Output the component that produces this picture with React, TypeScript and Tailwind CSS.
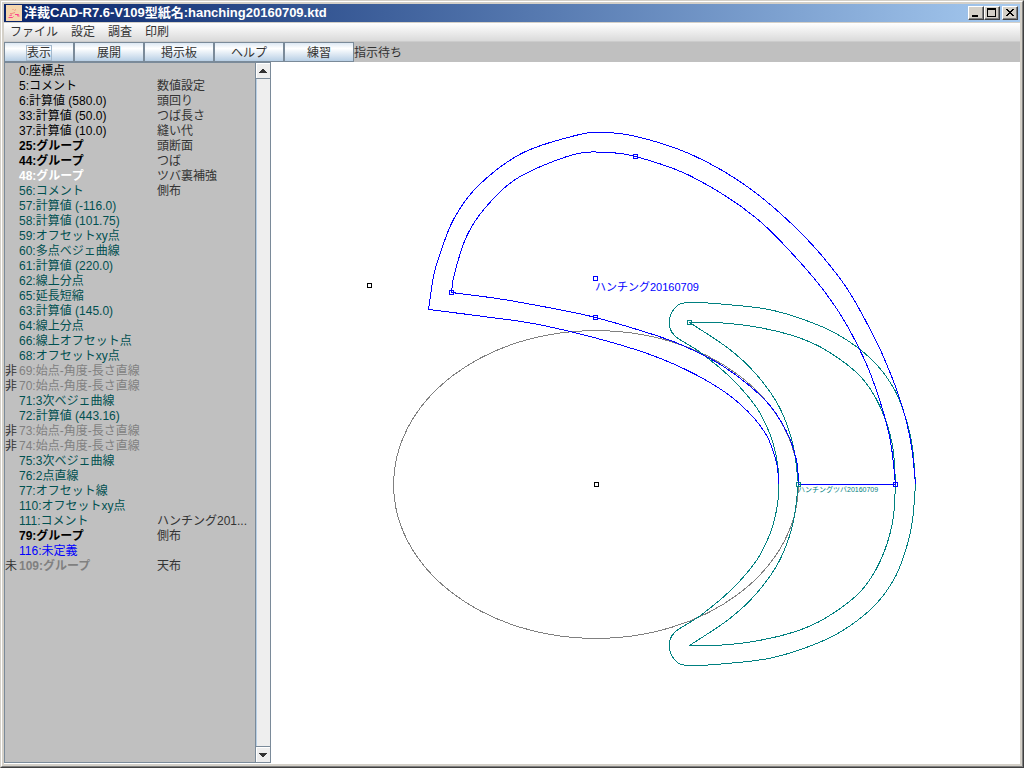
import React, { useState } from 'react';
import clsx from 'clsx';

type Kind = 'plain' | 'group' | 'selected' | 'active' | 'disabled' | 'undefined' | 'disabledGroup';

interface Row {
  id: number;
  name: string;
  note?: string;
  mark?: string;
  kind: Kind;
}

const kindClass: Record<Kind, string> = {
  plain: 'text-black',
  group: 'text-black font-bold',
  selected: 'text-white font-bold',
  active: 'text-[#005050]',
  disabled: 'text-[#808080]',
  undefined: 'text-[#0000ff]',
  disabledGroup: 'text-[#808080] font-bold',
};

const rows: Row[] = [
  { id: 0, name: '座標点', kind: 'plain' },
  { id: 5, name: 'コメント', note: '数値設定', kind: 'plain' },
  { id: 6, name: '計算値 (580.0)', note: '頭回り', kind: 'plain' },
  { id: 33, name: '計算値 (50.0)', note: 'つば長さ', kind: 'plain' },
  { id: 37, name: '計算値 (10.0)', note: '縫い代', kind: 'plain' },
  { id: 25, name: 'グループ', note: '頭断面', kind: 'group' },
  { id: 44, name: 'グループ', note: 'つば', kind: 'group' },
  { id: 48, name: 'グループ', note: 'ツバ裏補強', kind: 'selected' },
  { id: 56, name: 'コメント', note: '側布', kind: 'active' },
  { id: 57, name: '計算値 (-116.0)', kind: 'active' },
  { id: 58, name: '計算値 (101.75)', kind: 'active' },
  { id: 59, name: 'オフセットxy点', kind: 'active' },
  { id: 60, name: '多点ベジェ曲線', kind: 'active' },
  { id: 61, name: '計算値 (220.0)', kind: 'active' },
  { id: 62, name: '線上分点', kind: 'active' },
  { id: 65, name: '延長短縮', kind: 'active' },
  { id: 63, name: '計算値 (145.0)', kind: 'active' },
  { id: 64, name: '線上分点', kind: 'active' },
  { id: 66, name: '線上オフセット点', kind: 'active' },
  { id: 68, name: 'オフセットxy点', kind: 'active' },
  { id: 69, name: '始点-角度-長さ直線', mark: '非', kind: 'disabled' },
  { id: 70, name: '始点-角度-長さ直線', mark: '非', kind: 'disabled' },
  { id: 71, name: '3次ベジェ曲線', kind: 'active' },
  { id: 72, name: '計算値 (443.16)', kind: 'active' },
  { id: 73, name: '始点-角度-長さ直線', mark: '非', kind: 'disabled' },
  { id: 74, name: '始点-角度-長さ直線', mark: '非', kind: 'disabled' },
  { id: 75, name: '3次ベジェ曲線', kind: 'active' },
  { id: 76, name: '2点直線', kind: 'active' },
  { id: 77, name: 'オフセット線', kind: 'active' },
  { id: 110, name: 'オフセットxy点', kind: 'active' },
  { id: 111, name: 'コメント', note: 'ハンチング201...', kind: 'active' },
  { id: 79, name: 'グループ', note: '側布', kind: 'group' },
  { id: 116, name: '未定義', kind: 'undefined' },
  { id: 109, name: 'グループ', note: '天布', mark: '未', kind: 'disabledGroup' },
];

const menus = ['ファイル', '設定', '調査', '印刷'];
const tabs = ['表示', '展開', '掲示板', 'ヘルプ', '練習'];

const BLUE = '#0000ff';
const TEAL = '#008080';
const GRAY = '#808080';

// Each string is one smooth run of points; a corner is where two runs meet.
const crownOuter = [
  '915,484 911,446 902,407 885,361 865,320 841,280 801,233 748,187 693,155 640,137 604,132 575,135 521,153 477,186 453,219 439,255 433,276 428,309',
  '428,309 483,316 538,324 608,341 660,358 706,380 740,404 765,433 776,462 778,484',
];

const crownInner = [
  '895,484 890,441 879,399 863,357 838,311 806,269 755,217 691,176 635,156 604,152 573,154 518,177 485,207 466,236 454,273 451,292',
  '451,292 503,299 563,310 595,317 640,330 680,344 723,366 765,400 786,431 796,460 798,484',
];

// The brim is symmetric, so only its upper half is listed.
const brimOuter = [
  '915,484 912,447 906,420 895,391 876,364 850,342 821,326 773,310 726,304 687,302 674,308 669,321 674,335 700,352 731,378 756,407 770,435 777,463 778,484',
];

const brimInner = [
  '895,484 892,445 880,407 860,376 826,350 795,336 753,326 715,322 689,322',
  '689,322 728,348 755,373 778,405 792,442 798,484',
];

const nodes = [
  { x: 369, y: 285, color: '#000000' },
  { x: 596, y: 484, color: '#000000' },
  { x: 451, y: 292, color: BLUE },
  { x: 635, y: 156, color: BLUE },
  { x: 595, y: 278, color: BLUE },
  { x: 595, y: 317, color: BLUE },
  { x: 895, y: 484, color: BLUE },
  { x: 689, y: 322, color: TEAL },
  { x: 798, y: 484, color: TEAL },
];

// Catmull-Rom spline through the points, written as cubic beziers
const toPath = (run: string) => {
  const p = run.split(' ').map((s) => s.split(',').map(Number));
  let d = `M${p[0][0]} ${p[0][1]}`;
  for (let i = 0; i < p.length - 1; i++) {
    const a = p[Math.max(i - 1, 0)];
    const b = p[i];
    const c = p[i + 1];
    const e = p[Math.min(i + 2, p.length - 1)];
    d += `C${b[0] + (c[0] - a[0]) / 6} ${b[1] + (c[1] - a[1]) / 6} ${c[0] - (e[0] - b[0]) / 6} ${c[1] - (e[1] - b[1]) / 6} ${c[0]} ${c[1]}`;
  }
  return d;
};

const Curve: React.FC<{ runs: string[] }> = ({ runs }) => <path d={runs.map(toPath).join('')} />;

const WindowButton: React.FC<{ label: string; children: React.ReactNode }> = ({ label, children }) => (
  <button
    aria-label={label}
    className="h-[14px] w-4 border border-t-white border-l-white border-r-[#404040] border-b-[#404040] bg-[#d4d0c8] shadow-[inset_-1px_-1px_0_#808080]"
  >
    <svg width="14" height="12" viewBox="0 0 14 12" shapeRendering="crispEdges" className="block">
      {children}
    </svg>
  </button>
);

const TitleBar: React.FC = () => (
  <header className="flex h-[18px] shrink-0 items-center gap-[2px] bg-linear-to-r from-[#0a246a] to-[#a6caf0] px-[2px]">
    <svg width="16" height="16" viewBox="0 0 16 16" className="shrink-0">
      <rect width="16" height="16" fill="#f5d6ae" />
      <path d="M6.500 4l1 1M8.500 5.500l1.500-1M4 8.500h2l3-1" fill="none" stroke="#f08a80" />
      <path d="M3.500 10.500l2.500-.5M2.500 12.500h4l1-1M9 9.500h3.500l-1 1.500h2" fill="none" stroke="#ff3f8e" />
    </svg>
    <h1 className="flex-1 truncate text-[13px] leading-[18px] font-bold text-white">
      洋裁CAD-R7.6-V109型紙名:hanching20160709.ktd
    </h1>
    <div className="flex gap-[2px]">
      <div className="flex">
        <WindowButton label="最小化">
          <rect x="3" y="8" width="6" height="2" fill="#000" />
        </WindowButton>
        <WindowButton label="最大化">
          <path d="M2 1h9v9H2zM3 3v6h7V3z" fill="#000" fillRule="evenodd" />
        </WindowButton>
      </div>
      <WindowButton label="閉じる">
        <path
          d="M3 2h2v1h1v1h2V3h1V2h2v1h-1v1H9v1H8v1h1v1h1v1h1v1H9V8H8V7H6v1H5v1H3V8h1V7h1V6h1V5H5V4H4V3H3z"
          fill="#000"
        />
      </WindowButton>
    </div>
  </header>
);

const ScrollButton: React.FC<{ label: string; down?: boolean }> = ({ label, down }) => (
  <button
    aria-label={label}
    className={clsx(
      'flex h-4 w-full shrink-0 items-center justify-center border-[#7a8a99] bg-[#eeeeee] shadow-[inset_1px_1px_0_#fff]',
      down ? 'border-t' : 'border-b'
    )}
  >
    <svg width="8" height="4" viewBox="0 0 8 4" shapeRendering="crispEdges">
      <path d={down ? 'M0 0h8v1H7v1H6v1H5v1H3V3H2V2H1V1H0z' : 'M3 0h2v1h1v1h1v1h1v1H0V3h1V2h1V1h1z'} fill="#333" />
    </svg>
  </button>
);

const CommandList: React.FC = () => (
  <aside className="mb-px flex w-[267px] shrink-0 border border-[#7a8a99] bg-[#c0c0c0]">
    <div className="min-w-0 flex-1 overflow-hidden pt-px">
      <table className="w-full table-fixed border-collapse text-xs leading-[15px] whitespace-nowrap">
        <colgroup>
          <col className="w-[14px]" />
          <col className="w-[138px]" />
          <col />
        </colgroup>
        <tbody>
          {rows.map((row) => (
            <tr key={row.id} className="h-[15px]">
              <td className="p-0 text-[#333]">{row.mark}</td>
              <td className={clsx('p-0', kindClass[row.kind])}>
                {row.id}:{row.name}
              </td>
              <td className="p-0 text-[#333]">{row.note}</td>
            </tr>
          ))}
        </tbody>
      </table>
    </div>
    <div className="flex w-[15px] flex-col justify-between border-l border-[#7a8a99] bg-[#eeeeee] shadow-[inset_1px_0_0_#b8cfe5]">
      <ScrollButton label="上へ" />
      <ScrollButton label="下へ" down />
    </div>
  </aside>
);

const Brim: React.FC = () => (
  <g stroke={TEAL}>
    <Curve runs={brimOuter} />
    <Curve runs={brimInner} />
  </g>
);

const PatternCanvas: React.FC = () => (
  <main className="min-w-0 flex-1 overflow-hidden bg-white">
    <svg className="block h-full w-full">
      {/* pattern coordinates are window based, half a pixel keeps the lines sharp */}
      <g transform="translate(-270.5 -61.5)" fill="none" strokeWidth="1" shapeRendering="crispEdges">
        <ellipse cx="595.5" cy="484" rx="202.5" ry="154" stroke={GRAY} />
        <Brim />
        <g transform="matrix(1 0 0 -1 0 967)">
          <Brim />
        </g>
        <g stroke={BLUE}>
          <Curve runs={crownOuter} />
          <Curve runs={crownInner} />
          <line x1="798" y1="484" x2="895" y2="484" />
        </g>
        {nodes.map((n) => (
          <rect key={`${n.x}-${n.y}`} x={n.x - 2} y={n.y - 2} width="4" height="4" stroke={n.color} />
        ))}
      </g>
      <g transform="translate(-271 -62)">
        <text x="595" y="291" fontSize="11" fill={BLUE}>
          ハンチング20160709
        </text>
        <text x="798" y="492" fontSize="7" fill={TEAL}>
          ハンチングツバ20160709
        </text>
      </g>
    </svg>
  </main>
);

export default function App() {
  const [tab, setTab] = useState('表示');

  return (
    <div className="h-screen border border-t-[#d4d0c8] border-r-[#404040] border-b-[#404040] border-l-[#d4d0c8] font-['Liberation_Sans','Noto_Sans_CJK_JP',sans-serif]">
      <div className="h-full border border-t-white border-r-[#808080] border-b-[#808080] border-l-white">
        <div className="flex h-full flex-col border-2 border-[#d4d0c8] bg-[#d4d0c8]">
          <TitleBar />
          <nav className="mt-px flex h-[19px] shrink-0 items-center gap-[13px] border-b border-[#cccccc] bg-linear-to-b from-white to-[#dadada] px-[6px]">
            {menus.map((m) => (
              <button key={m} className="text-xs leading-[18px] text-[#333]">
                {m}
              </button>
            ))}
          </nav>
          <div className="flex h-5 shrink-0 items-center bg-[#c0c0c0]">
            {tabs.map((t) => (
              <button
                key={t}
                onClick={() => setTab(t)}
                className="flex h-5 w-[70px] items-center justify-center border border-[#7a8a99] bg-linear-to-b from-[#dde8f3] via-white via-30% to-[#b8cfe5] pt-px text-xs text-[#333]"
              >
                <span className={clsx('leading-[14px]', tab === t && 'outline outline-[#a3b8cc]')}>{t}</span>
              </button>
            ))}
            <span className="pt-px text-xs text-[#333]">指示待ち</span>
          </div>
          <div className="flex min-h-0 flex-1 bg-white">
            <CommandList />
            <PatternCanvas />
          </div>
        </div>
      </div>
    </div>
  );
}
